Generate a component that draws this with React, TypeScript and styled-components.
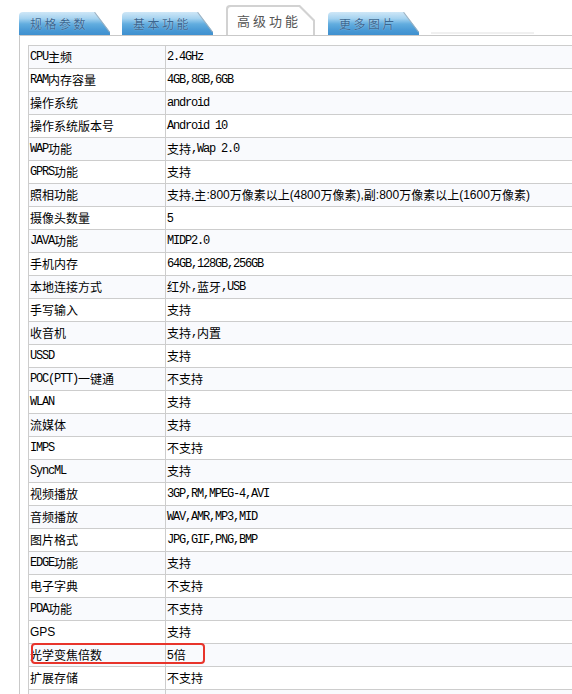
import React from 'react';
import styled, { createGlobalStyle } from 'styled-components';

const GlobalStyle = createGlobalStyle`
  html, body { margin: 0; padding: 0; background: #fff; overflow: hidden; }
  body {
    font-family: "Noto Sans CJK SC", "Liberation Sans", sans-serif;
    font-size: 12px;
    color: #000;
  }
`;

const Page = styled.div`
  width: 572px;
  height: 694px;
  overflow: hidden;
`;

const TabBar = styled.div`
  display: flex;
  align-items: flex-end;
  gap: 12px;
  height: 35px;
  padding-left: 19px;
  box-sizing: border-box;
`;

const TabWrap = styled.div`
  position: relative;
  flex: none;
  width: 91px;
  height: 23px;
  &::after {
    content: '';
    position: absolute;
    left: 76px;
    top: 0;
    width: 25px;
    height: 1px;
    background: #9fb1bf;
    transform-origin: 0 0;
    transform: rotate(53deg);
  }
`;

const TabFill = styled.div`
  position: absolute;
  inset: 0;
  background: linear-gradient(180deg, #cfe7f7 0%, #a6d3f0 28%, #62addf 52%, #4a9ad5 78%, #3f90cf 100%);
  clip-path: path('M0 4 Q0 0 4 0 L76 0 L91 20 L91 23 L0 23 Z');
`;

const TabLabel = styled.span`
  position: relative;
  display: block;
  padding-left: 11px;
  line-height: 23px;
  font-size: 12px;
  letter-spacing: 2.5px;
  color: #3a6690;
  text-shadow: 0 0 1px rgba(255, 255, 255, 0.6);
`;

const ActiveTab = styled.div`
  position: relative;
  flex: none;
  width: 89px;
  height: 30px;
  margin: 0 1px;
  background: #d2d2d2;
  clip-path: path('M0 4 Q0 0 4 0 L74 0 L89 15 L89 30 L0 30 Z');
  &::before {
    content: '';
    position: absolute;
    inset: 0;
    background: #fff;
    clip-path: path('M2 5 Q2 2 5 2 L73 2 L87 16 L87 30 L2 30 Z');
  }
`;

const ActiveLabel = styled.span`
  position: relative;
  display: block;
  padding: 3px 0 0 11px;
  line-height: 26px;
  font-size: 13px;
  letter-spacing: 3px;
  color: #555;
`;

const GhostTab = styled.div`
  flex: none;
  width: 103px;
  height: 2px;
  margin-bottom: 1px;
  background: #f0f0f0;
`;

const Panel = styled.div`
  margin-left: 19px;
  padding: 9px 0 0 8px;
  border-top: 1px solid #c9c9c9;
  border-left: 1px solid #c9c9c9;
`;

const Table = styled.table`
  border-collapse: collapse;
  table-layout: fixed;
  width: 560px;
`;

const LabelCol = styled.col`
  width: 137px;
`;

const Row = styled.tr<{ $alt: boolean }>`
  background: ${(p) => (p.$alt ? '#f9fafd' : '#fff')};
`;

const Cell = styled.td`
  border: 1px solid #cdcdcd;
  padding: 0;
  vertical-align: top;
`;

const CellInner = styled.div<{ $mark?: boolean }>`
  position: ${(p) => (p.$mark ? 'relative' : 'static')};
  display: flex;
  align-items: center;
  height: 22px;
  padding: 0 1px;
  white-space: pre;
  line-height: 14px;
`;

const Latin = styled.span<{ $sans?: boolean }>`
  font-family: ${(p) => (p.$sans ? '"Liberation Sans", Arial, sans-serif' : '"Liberation Mono", "Courier New", monospace')};
  font-size: 12px;
  letter-spacing: ${(p) => (p.$sans ? '0' : '-1.2px')};
`;

const Mark = styled.div`
  position: absolute;
  left: 2px;
  top: -1px;
  width: 174px;
  height: 21px;
  border: 2px solid #e8342b;
  border-radius: 4px;
  box-sizing: border-box;
  pointer-events: none;
`;

const mixed = (s: string, sans?: boolean) =>
  s
    .split(/([\x00-\x7f]+)/)
    .filter(Boolean)
    .map((part, i) =>
      /^[\x00-\x7f]+$/.test(part) ? (
        <Latin key={i} $sans={sans}>
          {part}
        </Latin>
      ) : (
        <span key={i}>{part}</span>
      ),
    );

type Spec = { k: string; v: string; ks?: boolean; vs?: boolean; mark?: boolean };

const rows: Spec[] = [
  { k: 'CPU主频', v: '2.4GHz' },
  { k: 'RAM内存容量', v: '4GB,8GB,6GB' },
  { k: '操作系统', v: 'android' },
  { k: '操作系统版本号', v: 'Android 10' },
  { k: 'WAP功能', v: '支持,Wap 2.0' },
  { k: 'GPRS功能', v: '支持' },
  { k: '照相功能', v: '支持,主:800万像素以上(4800万像素),副:800万像素以上(1600万像素)', vs: true },
  { k: '摄像头数量', v: '5', vs: true },
  { k: 'JAVA功能', v: 'MIDP2.0' },
  { k: '手机内存', v: '64GB,128GB,256GB' },
  { k: '本地连接方式', v: '红外,蓝牙,USB' },
  { k: '手写输入', v: '支持' },
  { k: '收音机', v: '支持,内置' },
  { k: 'USSD', v: '支持' },
  { k: 'POC(PTT)一键通', v: '不支持' },
  { k: 'WLAN', v: '支持' },
  { k: '流媒体', v: '支持' },
  { k: 'IMPS', v: '不支持' },
  { k: 'SyncML', v: '支持' },
  { k: '视频播放', v: '3GP,RM,MPEG-4,AVI' },
  { k: '音频播放', v: 'WAV,AMR,MP3,MID' },
  { k: '图片格式', v: 'JPG,GIF,PNG,BMP' },
  { k: 'EDGE功能', v: '支持' },
  { k: '电子字典', v: '不支持' },
  { k: 'PDA功能', v: '不支持' },
  { k: 'GPS', v: '支持', ks: true },
  { k: '光学变焦倍数', v: '5倍', vs: true, mark: true },
  { k: '扩展存储', v: '不支持' },
  { k: '', v: '' },
];

export default function App() {
  return (
    <Page>
      <GlobalStyle />
      <TabBar>
        <TabWrap>
          <TabFill />
          <TabLabel>规格参数</TabLabel>
        </TabWrap>
        <TabWrap>
          <TabFill />
          <TabLabel>基本功能</TabLabel>
        </TabWrap>
        <ActiveTab>
          <ActiveLabel>高级功能</ActiveLabel>
        </ActiveTab>
        <TabWrap>
          <TabFill />
          <TabLabel>更多图片</TabLabel>
        </TabWrap>
        <GhostTab />
      </TabBar>
      <Panel>
        <Table>
          <colgroup>
            <LabelCol />
            <col />
          </colgroup>
          <tbody>
            {rows.map((r, i) => (
              <Row key={i} $alt={i % 2 === 0}>
                <Cell>
                  <CellInner $mark={r.mark}>
                    {mixed(r.k, r.ks)}
                    {r.mark && <Mark />}
                  </CellInner>
                </Cell>
                <Cell>
                  <CellInner>{mixed(r.v, r.vs)}</CellInner>
                </Cell>
              </Row>
            ))}
          </tbody>
        </Table>
      </Panel>
    </Page>
  );
}
